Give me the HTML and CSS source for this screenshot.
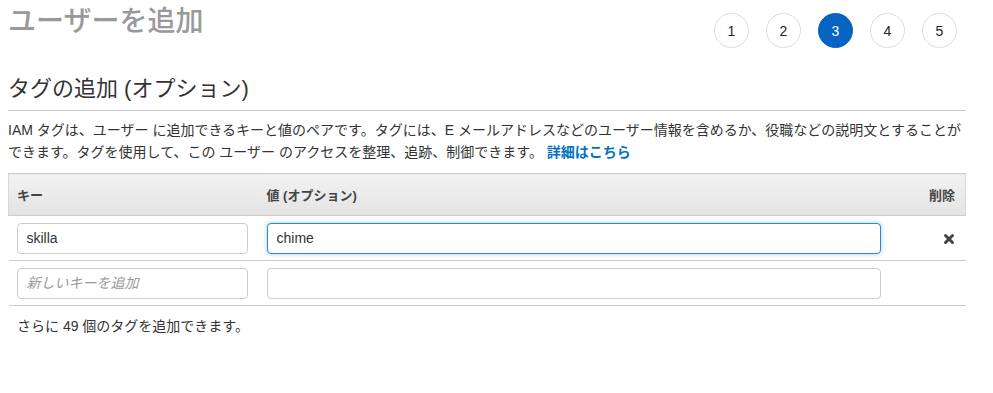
FILE: index.html
```html
<!DOCTYPE html>
<html lang="ja">
<head>
    <meta charset="UTF-8">
    <meta name="viewport" content="width=device-width, initial-scale=1.0">
    <title>ユーザーを追加</title>
    <link rel="stylesheet" href="styles.css">
</head>
<body>
    <div class="page">
        <!-- Page header with wizard steps -->
        <div class="page-head">
            <h1 class="page-title">ユーザーを追加</h1>
            <ol class="steps">
                <li class="step">1</li>
                <li class="step">2</li>
                <li class="step step-active">3</li>
                <li class="step">4</li>
                <li class="step">5</li>
            </ol>
        </div>

        <h2 class="section-title">タグの追加 (オプション)</h2>
        <p class="intro">
            IAM タグは、ユーザー に追加できるキーと値のペアです。タグには、E メールアドレスなどのユーザー情報を含めるか、役職などの説明文とすることができます。タグを使用して、この ユーザー のアクセスを整理、追跡、制御できます。 <a href="#" class="more-link">詳細はこちら</a>
        </p>

        <!-- Tag editor -->
        <table class="tags">
            <colgroup>
                <col class="col-key">
                <col class="col-value">
                <col class="col-remove">
            </colgroup>
            <thead>
                <tr>
                    <th>キー</th>
                    <th>値 (オプション)</th>
                    <th class="th-remove">削除</th>
                </tr>
            </thead>
            <tbody>
                <tr>
                    <td><input type="text" class="field" value="skilla"></td>
                    <td><input type="text" class="field field-focus" value="chime"></td>
                    <td class="td-remove">
                        <svg class="remove-icon" width="12" height="12" viewBox="0 0 12 12">
                            <path d="M2.5 2.5 L9.5 9.5 M9.5 2.5 L2.5 9.5" stroke="#444" stroke-width="3" stroke-linecap="round"/>
                        </svg>
                    </td>
                </tr>
                <tr>
                    <td><input type="text" class="field" placeholder="新しいキーを追加"></td>
                    <td><input type="text" class="field"></td>
                    <td></td>
                </tr>
            </tbody>
        </table>

        <p class="remaining">さらに 49 個のタグを追加できます。</p>
    </div>
</body>
</html>
```

FILE: styles.css
```css
body {
    font-family: "Liberation Sans", "Noto Sans CJK JP", sans-serif;
    margin: 0;
    padding: 0;
    color: #333;
    background-color: #fff;
}
.page {
    width: 958px;
    margin-left: 8px;
}
/* Header */
.page-head {
    display: flex;
    justify-content: space-between;
    align-items: flex-start;
    height: 60px;
}
.page-title {
    margin: 4px 0 0 0;
    font-size: 28px;
    font-weight: 500;
    line-height: 36px;
    color: #999;
}
.steps {
    display: flex;
    gap: 17px;
    list-style: none;
    margin: 13px 9px 0 0;
    padding: 0;
}
.step {
    width: 33px;
    height: 33px;
    border: 1px solid #ddd;
    border-radius: 50%;
    display: flex;
    align-items: center;
    justify-content: center;
    font-size: 14px;
    color: #222;
}
.step-active {
    background-color: #0563c1;
    border-color: #0563c1;
    color: #fff;
}
/* Section */
.section-title {
    margin: 15px 0 0 0;
    padding-bottom: 7px;
    font-size: 22px;
    font-weight: normal;
    line-height: 28px;
    color: #333;
    border-bottom: 1px solid #ccc;
}
.intro {
    margin: 8px 0 10px 0;
    font-size: 14px;
    line-height: 22px;
}
.more-link {
    color: #0073bb;
    font-weight: bold;
    text-decoration: none;
}
/* Tag table */
.tags {
    width: 958px;
    border-collapse: collapse;
    table-layout: fixed;
    font-size: 14px;
}
.col-key { width: 250px; }
.col-remove { width: 75px; }
.tags th {
    height: 41px;
    padding: 0 10px 0 8px;
    text-align: left;
    font-size: 13px;
    color: #444;
    background: linear-gradient(#f2f2f2, #e3e3e3);
    border: 1px solid #ccc;
    border-left-color: #d8d8d8;
    border-right-color: #d8d8d8;
}
.tags th + th {
    border-left: none;
}
.tags th:not(:last-child) {
    border-right: none;
}
.tags .th-remove {
    text-align: right;
}
.tags td {
    height: 44px;
    padding: 0 11px 0 8px;
    border-bottom: 1px solid #ccc;
}
.tags td + td {
    padding-right: 10px;
}
.td-remove {
    text-align: right;
}
.remove-icon {
    margin-right: 1px;
    vertical-align: middle;
}
.field {
    width: 100%;
    height: 31px;
    box-sizing: border-box;
    padding: 0 9px;
    border: 1px solid #ccc;
    border-radius: 4px;
    font-family: "Liberation Sans", "Noto Sans CJK JP", sans-serif;
    font-size: 14px;
    color: #333;
}
.field::placeholder {
    color: #999;
    font-style: italic;
}
.field-focus {
    border-color: #2c87de;
    box-shadow: 0 0 4px rgba(44, 135, 222, 0.45);
}
.remaining {
    margin: 11px 0 0 9px;
    font-size: 14px;
    line-height: 18px;
}
```
